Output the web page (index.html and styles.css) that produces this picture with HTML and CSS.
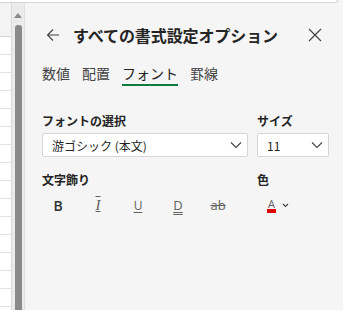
FILE: index.html
```html
<!DOCTYPE html>
<html lang="ja">
<head>
    <meta charset="UTF-8">
    <meta name="viewport" content="width=device-width, initial-scale=1.0">
    <title>書式設定</title>
    <link rel="stylesheet" href="styles.css">
</head>
<body>
    <div class="topbar"></div>
    <div class="main">
        <div class="sheet">
            <div class="sheet-head"></div>
            <div class="sheet-rows"></div>
        </div>
        <div class="scrollbar">
            <div class="arrow-up"></div>
            <div class="thumb"></div>
        </div>
        <div class="panel">
            <div class="header">
                <span class="back">
                    <svg width="14" height="14" viewBox="0 0 14 14"><path d="M13 7H1.5M7 1.5L1.5 7L7 12.5" fill="none" stroke="#424242" stroke-width="1.1"/></svg>
                </span>
                <h1 class="title">すべての書式設定オプション</h1>
                <span class="close">
                    <svg width="14" height="14" viewBox="0 0 14 14"><path d="M1 1L13 13M13 1L1 13" fill="none" stroke="#424242" stroke-width="1.2"/></svg>
                </span>
            </div>
            <div class="tabs">
                <span class="tab">数値</span>
                <span class="tab">配置</span>
                <span class="tab active">フォント</span>
                <span class="tab">罫線</span>
            </div>

            <div class="row">
                <div class="field font-field">
                    <label>フォントの選択</label>
                    <div class="select">
                        <span>游ゴシック (本文)</span>
                        <svg width="12" height="8" viewBox="0 0 12 8"><path d="M1 1.5L6 6.5L11 1.5" fill="none" stroke="#424242" stroke-width="1.1"/></svg>
                    </div>
                </div>
                <div class="field size-field">
                    <label>サイズ</label>
                    <div class="select">
                        <span>11</span>
                        <svg width="12" height="8" viewBox="0 0 12 8"><path d="M1 1.5L6 6.5L11 1.5" fill="none" stroke="#424242" stroke-width="1.1"/></svg>
                    </div>
                </div>
            </div>

            <div class="row">
                <div class="field font-field">
                    <label>文字飾り</label>
                    <div class="tools">
                        <span class="tool bold">B</span>
                        <span class="tool italic">I</span>
                        <span class="tool underline">U</span>
                        <span class="tool double">D</span>
                        <span class="tool strike">ab</span>
                    </div>
                </div>
                <div class="field size-field">
                    <label>色</label>
                    <div class="color">
                        <span class="color-a">A</span>
                        <svg width="7" height="5" viewBox="0 0 7 5"><path d="M1 1L3.5 3.5L6 1" fill="none" stroke="#424242" stroke-width="1.1"/></svg>
                    </div>
                </div>
            </div>
        </div>
    </div>
</body>
</html>
```

FILE: styles.css
```css
body {
    margin: 0;
    height: 310px;
    overflow: hidden;
    background: #f5f5f5;
    font-family: "Noto Sans CJK JP", "Noto Sans", sans-serif;
    color: #242424;
}
.topbar {
    height: 2px;
    margin-right: 5px;
    background: #ffffff;
    border-bottom: 1px solid #d4d4d4;
    border-right: 1px solid #d4d4d4;
    border-bottom-right-radius: 4px;
}
.main {
    display: flex;
    height: 307px;
}
.sheet {
    width: 11px;
    display: flex;
    flex-direction: column;
}
.sheet-head {
    height: 33px;
    background: #f3f3f3;
    border-bottom: 1px solid #d4d4d4;
}
.sheet-rows {
    flex: 1;
    background: repeating-linear-gradient(to bottom, #ffffff 0, #ffffff 17px, #e1e1e1 17px, #e1e1e1 18px);
}
.scrollbar {
    width: 12px;
    background: #ebebeb;
    border-left: 1px solid #d9d9d9;
    border-right: 1px solid #dedede;
    display: flex;
    flex-direction: column;
    align-items: center;
}
.arrow-up {
    margin-top: 10px;
    width: 0;
    height: 0;
    border-left: 4px solid transparent;
    border-right: 4px solid transparent;
    border-bottom: 5px solid #8a8a8a;
}
.thumb {
    margin-top: 7px;
    width: 7px;
    flex: 1;
    background: #8a8a8a;
    border-radius: 3px 3px 0 0;
}
.panel {
    flex: 1;
    padding: 0 14px 0 17px;
}
.header {
    display: flex;
    align-items: center;
    height: 34px;
    margin-top: 15px;
}
.back {
    display: flex;
    margin-left: 4px;
    width: 27px;
}
.title {
    flex: 1;
    margin: 0;
    font-size: 16px;
    font-weight: 700;
    letter-spacing: -0.1px;
}
.close {
    display: flex;
    margin-right: 7px;
}
.tabs {
    display: flex;
    gap: 12px;
    margin-top: 11px;
}
.tab {
    font-size: 14px;
    line-height: 20px;
    padding-bottom: 1px;
    color: #424242;
    border-bottom: 2px solid transparent;
}
.tab.active {
    color: #242424;
    border-bottom-color: #107c41;
}
.row {
    display: flex;
    gap: 9px;
}
.row + .row {
    margin-top: 14px;
}
.tabs + .row {
    margin-top: 26px;
}
.field {
    display: flex;
    flex-direction: column;
}
.font-field {
    width: 206px;
}
.size-field {
    width: 72px;
}
label {
    font-size: 12px;
    font-weight: 700;
    line-height: 18px;
    margin-bottom: 3px;
}
.select {
    display: flex;
    align-items: center;
    justify-content: space-between;
    height: 22px;
    padding: 0 5px 0 9px;
    background: #ffffff;
    border: 1px solid #d6d6d6;
    border-radius: 2px;
    font-size: 12px;
}
.tools {
    display: flex;
    gap: 8px;
}
.tool {
    width: 32px;
    height: 26px;
    display: flex;
    align-items: center;
    justify-content: center;
    font-family: "Open Sans", sans-serif;
    font-size: 14px;
    color: #616161;
}
.bold {
    color: #303030;
    font-weight: 600;
}
.italic {
    font-family: "Liberation Serif", serif;
    font-style: italic;
    font-size: 15px;
    text-decoration: overline underline;
    text-decoration-thickness: 1px;
}
.underline {
    font-size: 12px;
    text-decoration: underline;
    text-underline-offset: 2px;
}
.double {
    font-size: 13px;
    text-decoration: underline double;
    text-underline-offset: 2px;
}
.strike {
    font-size: 13px;
    text-decoration: line-through;
}
.color {
    display: flex;
    align-items: center;
    gap: 6px;
    height: 26px;
    padding-left: 10px;
}
.color-a {
    font-family: "Open Sans", sans-serif;
    font-size: 11px;
    line-height: 11px;
    color: #616161;
    padding: 0 1px;
    border-bottom: 4px solid #e00000;
}
```
